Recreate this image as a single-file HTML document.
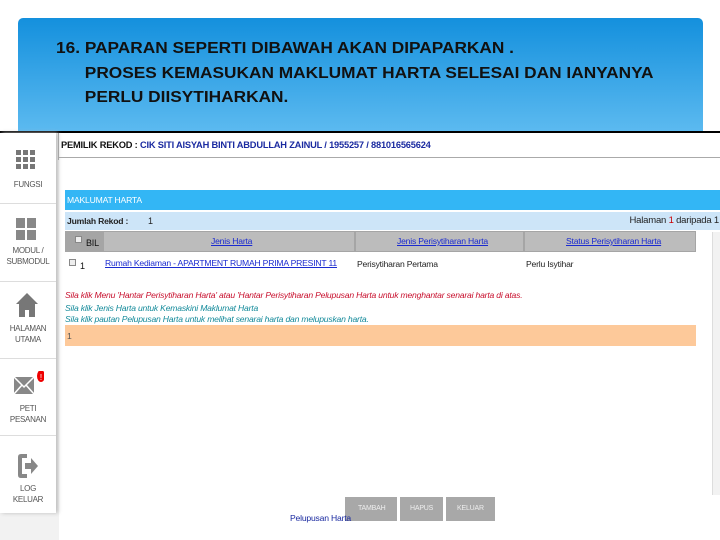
<!DOCTYPE html>
<html><head><meta charset="utf-8"><style>
*{margin:0;padding:0;box-sizing:border-box}
body{width:720px;height:540px;position:relative;overflow:hidden;background:#fff;font-family:"Liberation Sans",sans-serif}
.abs{position:absolute}
.hdr{left:18px;top:18px;width:685px;height:114px;border-radius:5px 5px 0 0;background:linear-gradient(#1490dd,#5cbaf0)}
.hdr div{position:absolute;left:38px;top:19px;font-family:"Liberation Sans Narrow","Liberation Sans",sans-serif;font-weight:bold;font-size:16px;line-height:24.5px;color:#111;transform:scaleX(1.08);transform-origin:left;white-space:nowrap}
.side{left:0;top:133px;width:56px;height:380px;background:#fff;box-shadow:2px 0 4px #bbb}
.lbl{position:absolute;width:56px;text-align:center;font-size:8px;color:#555;line-height:11px;letter-spacing:-.3px}
.sep{position:absolute;left:0;width:56px;height:1px;background:#ddd}
.t{font-size:9px;white-space:nowrap;letter-spacing:-.2px}
.s{font-size:8.6px}
</style></head><body>
<div class="abs hdr"><div>16. PAPARAN SEPERTI DIBAWAH AKAN DIPAPARKAN .<br>&nbsp;&nbsp;&nbsp;&nbsp;&nbsp;&nbsp;PROSES KEMASUKAN MAKLUMAT HARTA SELESAI DAN IANYANYA<br>&nbsp;&nbsp;&nbsp;&nbsp;&nbsp;&nbsp;PERLU DIISYTIHARKAN.</div></div>
<div class="abs" style="left:0;top:131px;width:720px;height:2px;background:#000"></div>
<div class="abs" style="left:0;top:133px;width:59px;height:407px;background:#f2f2f2"></div>
<div class="abs" style="left:58px;top:133px;width:1px;height:27px;background:#999"></div>
<div class="abs side">
 <svg class="abs" style="left:16px;top:17px" width="20" height="20"><g fill="#777"><rect x="0" y="0" width="5" height="5"/><rect x="7" y="0" width="5" height="5"/><rect x="14" y="0" width="5" height="5"/><rect x="0" y="7" width="5" height="5"/><rect x="7" y="7" width="5" height="5"/><rect x="14" y="7" width="5" height="5"/><rect x="0" y="14" width="5" height="5"/><rect x="7" y="14" width="5" height="5"/><rect x="14" y="14" width="5" height="5"/></g></svg>
 <div class="lbl" style="top:46px">FUNGSI</div>
 <div class="sep" style="top:70px"></div>
 <svg class="abs" style="left:16px;top:85px" width="20" height="22"><g fill="#888"><rect x="0" y="0" width="9" height="10"/><rect x="11" y="0" width="9" height="10"/><rect x="0" y="12" width="9" height="10"/><rect x="11" y="12" width="9" height="10"/></g></svg>
 <div class="lbl" style="top:112px">MODUL /<br>SUBMODUL</div>
 <div class="sep" style="top:148px"></div>
 <svg class="abs" style="left:16px;top:160px" width="22" height="24"><path d="M11 0 L22 11 L19 11 L19 24 L13 24 L13 17 L9 17 L9 24 L3 24 L3 11 L0 11 Z" fill="#777"/></svg>
 <div class="lbl" style="top:190px">HALAMAN<br>UTAMA</div>
 <div class="sep" style="top:225px"></div>
 <svg class="abs" style="left:14px;top:238px" width="30" height="24"><rect x="0" y="6" width="20" height="17" fill="#888"/><path d="M0 6 L10 16 L20 6 M0 23 L8 14 M20 23 L12 14" stroke="#fff" stroke-width="1.5" fill="none"/><ellipse cx="27" cy="5" rx="4" ry="6" fill="#e00"/><text x="27" y="9" font-size="8" fill="#fff" text-anchor="middle" font-family="Liberation Sans">!</text></svg>
 <div class="lbl" style="top:270px">PETI<br>PESANAN</div>
 <div class="sep" style="top:302px"></div>
 <svg class="abs" style="left:17px;top:320px" width="22" height="26"><path d="M10 1 H4 Q1 1 1 4 V22 Q1 25 4 25 H10 V21 H5 V5 H10 Z" fill="#888"/><path d="M8 10 H14 V5 L21 13 L14 21 V16 H8 Z" fill="#888"/></svg>
 <div class="lbl" style="top:350px">LOG<br>KELUAR</div>
</div>
<div class="abs t" style="left:61px;top:140px;font-weight:bold;color:#111;font-size:9.3px">PEMILIK REKOD : <span style="color:#1a2aa0">CIK SITI AISYAH BINTI ABDULLAH ZAINUL / 1955257 / 881016565624</span></div>
<div class="abs" style="left:59px;top:157px;width:661px;height:1px;background:#aaa"></div>
<div class="abs" style="left:65px;top:190px;width:655px;height:20px;background:#33b6f5"></div>
<div class="abs t s" style="left:67px;top:195px;color:#fff">MAKLUMAT HARTA</div>
<div class="abs" style="left:65px;top:212px;width:655px;height:18px;background:#cde5f8"></div>
<div class="abs t s" style="left:67px;top:216px;font-weight:bold;color:#222">Jumlah Rekod :</div>
<div class="abs t" style="left:148px;top:216px;color:#222">1</div>
<div class="abs t" style="right:1px;top:215px;color:#222;font-size:9.5px">Halaman <span style="color:#c00">1</span> daripada 1</div>
<div class="abs" style="left:65px;top:231px;width:631px;height:21px;background:#a5a5a5"></div>
<div class="abs" style="left:104px;top:232px;width:250px;height:19px;background:#bcbcbc"></div>
<div class="abs" style="left:356px;top:232px;width:167px;height:19px;background:#bcbcbc"></div>
<div class="abs" style="left:525px;top:232px;width:170px;height:19px;background:#bcbcbc"></div>
<div class="abs" style="left:75px;top:236px;width:7px;height:7px;border:1px solid #888;background:#eee"></div>
<div class="abs t" style="left:86px;top:238px;color:#111">BIL</div>
<div class="abs t s" style="left:211px;top:236px;color:#1a2ad0;text-decoration:underline">Jenis Harta</div>
<div class="abs t s" style="left:397px;top:236px;color:#1a2ad0;text-decoration:underline">Jenis Perisytiharan Harta</div>
<div class="abs t s" style="left:566px;top:236px;color:#1a2ad0;text-decoration:underline">Status Perisytiharan Harta</div>
<div class="abs" style="left:69px;top:259px;width:7px;height:7px;border:1px solid #888;background:#eee"></div>
<div class="abs t" style="left:80px;top:261px;color:#111">1</div>
<div class="abs t s" style="left:105px;top:258px;color:#1a2ad0;text-decoration:underline">Rumah Kediaman - APARTMENT RUMAH PRIMA PRESINT 11</div>
<div class="abs t s" style="left:357px;top:259px;color:#222">Perisytiharan Pertama</div>
<div class="abs t s" style="left:526px;top:259px;color:#222">Perlu Isytihar</div>
<div class="abs t s" style="left:65px;top:290px;color:#c8102e;font-style:italic">Sila klik Menu 'Hantar Perisytiharan Harta' atau 'Hantar Perisytiharan Pelupusan Harta untuk menghantar senarai harta di atas.</div>
<div class="abs t s" style="left:65px;top:303px;color:#138a9a;font-style:italic">Sila klik Jenis Harta untuk Kemaskini Maklumat Harta</div>
<div class="abs t s" style="left:65px;top:314px;color:#138a9a;font-style:italic">Sila klik pautan Pelupusan Harta untuk melihat senarai harta dan melupuskan harta.</div>
<div class="abs" style="left:65px;top:325px;width:631px;height:21px;background:#fdc99a"></div>
<div class="abs t s" style="left:67px;top:331px;color:#555">1</div>
<div class="abs" style="left:712px;top:232px;width:8px;height:263px;background:#f2f2f2;border-left:1px solid #ddd"></div>
<div class="abs" style="left:345px;top:497px;width:52px;height:24px;background:#a8a8a8"></div>
<div class="abs" style="left:400px;top:497px;width:43px;height:24px;background:#a8a8a8"></div>
<div class="abs" style="left:446px;top:497px;width:49px;height:24px;background:#a8a8a8"></div>
<div class="abs t" style="left:358px;top:505px;color:#eee;font-size:7px">TAMBAH</div>
<div class="abs t" style="left:410px;top:505px;color:#eee;font-size:7px">HAPUS</div>
<div class="abs t" style="left:457px;top:505px;color:#eee;font-size:7px">KELUAR</div>
<div class="abs t s" style="left:290px;top:513px;color:#1a2aa0">Pelupusan Harta</div>
</body></html>
